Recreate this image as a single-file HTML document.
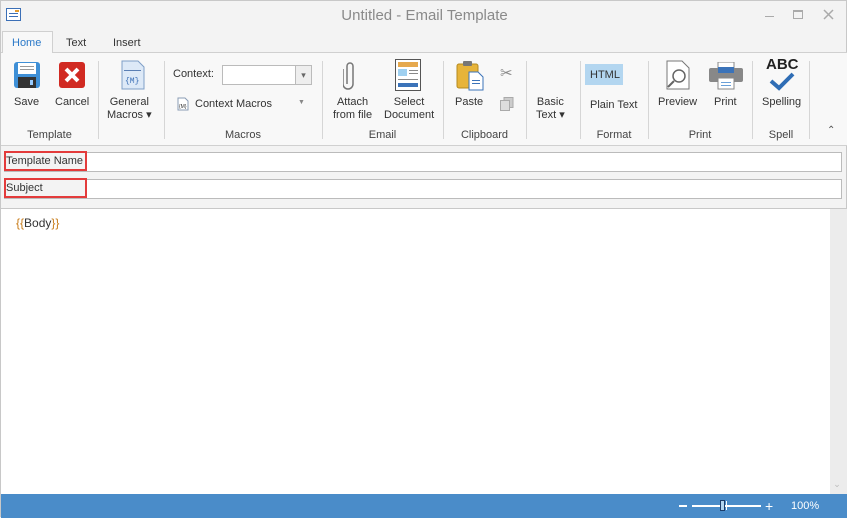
<!DOCTYPE html>
<html><head><meta charset="utf-8"><style>
*{margin:0;padding:0;box-sizing:border-box}
body{width:847px;height:517px;overflow:hidden;background:#f3f3f3;font-family:"Liberation Sans",sans-serif;font-size:11px;color:#333;position:relative;border:1px solid #c8c8c8}
.a{position:absolute}
.t{position:absolute;font-size:11px;color:#333;text-align:center;white-space:nowrap}
.sep{position:absolute;top:60px;width:1px;height:78px;background:#d6d6d6}
.grp{position:absolute;top:128px;font-size:11px;color:#444;text-align:center}
</style></head><body>
<svg class="a" style="left:5px;top:7px" width="16" height="14"><rect x="0.5" y="0.5" width="14" height="12" fill="#fff" stroke="#3b6fb6"/><rect x="3" y="5" width="9" height="1" fill="#3b6fb6"/><rect x="3" y="8" width="9" height="1" fill="#3b6fb6"/><rect x="9" y="2" width="4" height="2" fill="#e39b2d"/></svg>
<div class="a" style="left:0;width:847px;top:6px;text-align:center;font-size:15px;color:#8a8a8a">Untitled - Email Template</div>
<div class="a" style="left:764px;top:15px;width:9px;height:1px;background:#aaa"></div>
<div class="a" style="left:792px;top:9px;width:10px;height:9px;border:1px solid #aaa;border-top-width:2px"></div>
<svg class="a" style="left:822px;top:8px" width="11" height="11"><path d="M1 1L10 10M10 1L1 10" stroke="#aaa" stroke-width="1.5"/></svg>
<div class="a" style="left:0;top:51px;width:847px;height:1px;background:#d0d0d0"></div>
<div class="a" style="left:1px;top:30px;width:51px;height:22px;background:#f8f8f8;border:1px solid #d0d0d0;border-bottom:none"></div>
<div class="t" style="left:11px;top:36px;color:#2b79c8">Home</div>
<div class="t" style="left:65px;top:36px">Text</div>
<div class="t" style="left:112px;top:36px">Insert</div>
<div class="a" style="left:0;top:52px;width:847px;height:92px;background:#f8f8f8"></div>
<div class="a" style="left:0;top:144px;width:847px;height:1px;background:#d0d0d0"></div>
<svg class="a" style="left:12px;top:60px" width="28" height="28"><rect x="1" y="1" width="26" height="26" rx="3" fill="#3e8fd6"/><rect x="5" y="2" width="18" height="11" fill="#fff"/><rect x="7" y="5" width="14" height="1" fill="#999"/><rect x="7" y="8" width="14" height="1" fill="#999"/><rect x="5" y="16" width="18" height="11" fill="#333"/><rect x="17" y="19" width="3" height="5" fill="#9cf"/></svg>
<div class="t" style="left:13px;top:95px">Save</div>
<svg class="a" style="left:57px;top:60px" width="28" height="28"><rect x="1" y="1" width="26" height="26" rx="3" fill="#d12a22"/><path d="M8 8L20 20M20 8L8 20" stroke="#fff" stroke-width="4"/></svg>
<div class="t" style="left:54px;top:95px">Cancel</div>
<div class="grp" style="left:0;width:97px">Template</div>
<div class="sep" style="left:97px"></div>
<svg class="a" style="left:120px;top:59px" width="24" height="30"><path d="M1 1H17L23 7V29H1Z" fill="#dde9f7" stroke="#7f9fc7"/><rect x="3" y="10" width="17" height="1" fill="#5b7fb4"/><text x="4" y="23" font-size="8" font-family="Liberation Mono" fill="#3b6fb6">{M}</text></svg>
<div class="t" style="left:106px;top:95px;line-height:13px">General<br>Macros ▾</div>
<div class="sep" style="left:163px"></div>
<div class="t" style="left:172px;top:67px">Context:</div>
<div class="a" style="left:221px;top:64px;width:90px;height:20px;background:#fff;border:1px solid #bbb"></div>
<div class="a" style="left:294px;top:65px;width:16px;height:18px;background:#eee;border-left:1px solid #bbb;font-size:9px;color:#666;text-align:center;line-height:18px">▾</div>
<svg class="a" style="left:176px;top:96px" width="12" height="14"><path d="M1 1H8L11 4V13H1Z" fill="#fff" stroke="#8a9cb5"/><text x="2" y="11" font-size="5" fill="#333">{M}</text></svg>
<div class="t" style="left:194px;top:97px">Context Macros</div>
<div class="t" style="left:297px;top:98px;font-size:7px;color:#888">▼</div>
<div class="grp" style="left:163px;width:158px">Macros</div>
<div class="sep" style="left:321px"></div>
<svg class="a" style="left:342px;top:59px" width="14" height="30"><path d="M4 24V6a3 3 0 0 1 6 0v18a5 5 0 0 1-10 0V9" fill="none" stroke="#777" stroke-width="1.5"/></svg>
<div class="t" style="left:332px;top:95px;line-height:13px">Attach<br>from file</div>
<svg class="a" style="left:394px;top:58px" width="26" height="32"><rect x="0.5" y="0.5" width="25" height="31" fill="#fff" stroke="#555"/><rect x="3" y="3" width="20" height="5" fill="#e6a94e"/><rect x="3" y="10" width="9" height="7" fill="#9fd0f0"/><rect x="14" y="11" width="9" height="1" fill="#888"/><rect x="14" y="14" width="9" height="1" fill="#888"/><rect x="3" y="20" width="20" height="1" fill="#888"/><rect x="3" y="24" width="20" height="4" fill="#3b73b9"/></svg>
<div class="t" style="left:383px;top:95px;line-height:13px">Select<br>Document</div>
<div class="grp" style="left:321px;width:121px">Email</div>
<div class="sep" style="left:442px"></div>
<svg class="a" style="left:455px;top:58px" width="30" height="32"><rect x="1" y="5" width="21" height="24" rx="2" fill="#e7b43a" stroke="#b58a1f"/><rect x="7" y="2" width="9" height="5" rx="1" fill="#777"/><path d="M13 13H22L27 18V31H13Z" fill="#fff" stroke="#3b73b9"/><rect x="16" y="21" width="8" height="1" fill="#3b73b9"/><rect x="16" y="24" width="8" height="1" fill="#3b73b9"/></svg>
<div class="t" style="left:454px;top:95px">Paste</div>
<div class="t" style="left:499px;top:63px;font-size:15px;color:#888">✂</div>
<svg class="a" style="left:499px;top:96px" width="14" height="14"><rect x="4" y="0.5" width="9" height="10" fill="#ccc" stroke="#aaa"/><rect x="0.5" y="3.5" width="9" height="10" fill="#ddd" stroke="#aaa"/></svg>
<div class="grp" style="left:442px;width:83px">Clipboard</div>
<div class="sep" style="left:525px"></div>
<div class="t" style="left:535px;top:95px;line-height:13px">Basic<br>Text ▾</div>
<div class="sep" style="left:579px"></div>
<div class="a" style="left:584px;top:63px;width:38px;height:21px;background:#b3d6f0"></div>
<div class="t" style="left:589px;top:68px">HTML</div>
<div class="t" style="left:589px;top:98px">Plain Text</div>
<div class="grp" style="left:579px;width:68px">Format</div>
<div class="sep" style="left:647px"></div>
<svg class="a" style="left:665px;top:59px" width="24" height="30"><path d="M1 1H16L23 8V29H1Z" fill="#fff" stroke="#777"/><circle cx="13" cy="16" r="6" fill="none" stroke="#666" stroke-width="1.5"/><path d="M8 21L2 27" stroke="#666" stroke-width="2"/></svg>
<div class="t" style="left:657px;top:95px">Preview</div>
<svg class="a" style="left:708px;top:61px" width="34" height="28"><rect x="9" y="0" width="16" height="7" fill="#fff" stroke="#888"/><rect x="0" y="6" width="34" height="14" rx="2" fill="#888"/><rect x="9" y="5" width="16" height="6" fill="#3b73b9"/><rect x="9" y="16" width="16" height="11" fill="#fff" stroke="#888"/><rect x="12" y="20" width="10" height="1" fill="#6aa0d8"/><rect x="12" y="23" width="10" height="1" fill="#6aa0d8"/></svg>
<div class="t" style="left:713px;top:95px">Print</div>
<div class="grp" style="left:647px;width:104px">Print</div>
<div class="sep" style="left:751px"></div>
<div class="t" style="left:765px;top:55px;font-size:15px;color:#222;font-weight:bold">ABC</div>
<svg class="a" style="left:767px;top:71px" width="28" height="20"><path d="M3 9L11 16L25 2" fill="none" stroke="#2f6db5" stroke-width="4"/></svg>
<div class="t" style="left:761px;top:95px">Spelling</div>
<div class="grp" style="left:751px;width:58px">Spell</div>
<div class="sep" style="left:808px"></div>
<div class="t" style="left:826px;top:124px;font-size:10px;color:#555">⌃</div>
<div class="a" style="left:3px;top:151px;width:838px;height:20px;background:#fff;border:1px solid #bbb"></div>
<div class="a" style="left:3px;top:150px;width:83px;height:20px;background:#f3f3f3;border:2px solid #e33b3b"></div>
<div class="t" style="left:5px;top:154px">Template Name</div>
<div class="a" style="left:3px;top:178px;width:838px;height:20px;background:#fff;border:1px solid #bbb"></div>
<div class="a" style="left:3px;top:177px;width:83px;height:20px;background:#f3f3f3;border:2px solid #e33b3b"></div>
<div class="t" style="left:5px;top:181px">Subject</div>
<div class="a" style="left:0;top:207px;width:847px;height:1px;background:#c8c8c8"></div>
<div class="a" style="left:0;top:208px;width:829px;height:285px;background:#fff"></div>
<div class="a" style="left:829px;top:208px;width:17px;height:285px;background:#ececec"></div>
<div class="t" style="left:821px;top:478px;width:30px;font-size:9px;color:#bbb">⌄</div>
<div class="t" style="left:15px;top:215px;font-size:12px;color:#333"><span style="color:#c77a16">{{</span>Body<span style="color:#c77a16">}}</span></div>
<div class="a" style="left:0;top:493px;width:847px;height:24px;background:#4a8cc9"></div>
<div class="a" style="left:678px;top:504px;width:8px;height:2px;background:#fff"></div>
<div class="a" style="left:691px;top:504px;width:69px;height:2px;background:#fff"></div>
<div class="a" style="left:719px;top:499px;width:5px;height:11px;background:#b3d6f0;border:1px solid #1c3d6b"></div>
<div class="a" style="left:725px;top:500px;width:1px;height:9px;background:#fff"></div>
<div class="t" style="left:764px;top:497px;font-size:14px;color:#fff">+</div>
<div class="t" style="left:790px;top:499px;color:#fff">100%</div>
</body></html>
